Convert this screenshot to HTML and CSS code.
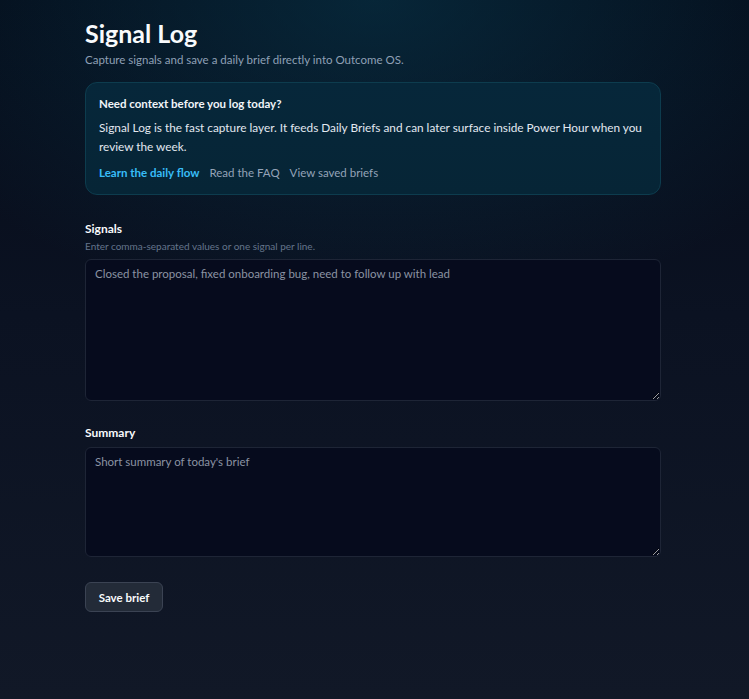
FILE: index.html
```html
<!DOCTYPE html>
<html lang="en">
<head>
<meta charset="utf-8">
<title>Signal Log</title>
<link rel="stylesheet" href="styles.css">
</head>
<body>
<main class="page">
  <h1 class="title">Signal Log</h1>
  <p class="subtitle">Capture signals and save a daily brief directly into Outcome OS.</p>

  <section class="context">
    <h2 class="context-title">Need context before you log today?</h2>
    <p class="context-body">Signal Log is the fast capture layer. It feeds Daily Briefs and can later surface inside Power Hour when you review the week.</p>
    <nav class="context-links">
      <a class="link link-primary" href="#">Learn the daily flow</a>
      <a class="link" href="#">Read the FAQ</a>
      <a class="link" href="#">View saved briefs</a>
    </nav>
  </section>

  <form class="form">
    <div class="field">
      <label class="label" for="signals">Signals</label>
      <p class="hint">Enter comma-separated values or one signal per line.</p>
      <textarea id="signals" class="input input-signals" placeholder="Closed the proposal, fixed onboarding bug, need to follow up with lead"></textarea>
    </div>
    <div class="field">
      <label class="label" for="summary">Summary</label>
      <textarea id="summary" class="input input-summary" placeholder="Short summary of today's brief"></textarea>
    </div>
    <button type="button" class="button">Save brief</button>
  </form>
</main>
</body>
</html>
```

FILE: styles.css
```css
* { box-sizing: border-box; }

html, body {
  margin: 0;
  min-height: 100%;
}

body {
  min-height: 699px;
  font-family: "Lato", "Noto Sans", sans-serif;
  color: #e5e7eb;
  background:
    radial-gradient(ellipse 70% 45% at 50% 0%, rgba(8, 60, 82, 0.55), rgba(8, 60, 82, 0) 100%),
    linear-gradient(180deg, #050b18 0%, #0b1222 45%, #111827 100%);
}

.page {
  width: 579px;
  margin: 0 auto;
  padding: 17px 3px 40px 0;
}

.title {
  margin: 0;
  font-size: 25px;
  line-height: 32px;
  font-weight: 700;
  color: #f8fafc;
}

.subtitle {
  margin: 3px 0 0;
  font-size: 11.5px;
  line-height: 16px;
  color: #8fa0b6;
}

.context {
  margin-top: 14px;
  padding: 13px 13px 13px;
  border: 1px solid #0d3c4e;
  border-radius: 12px;
  background: linear-gradient(180deg, #06273a 0%, #062536 100%);
}

.context-title {
  margin: 0;
  font-size: 11.5px;
  line-height: 16px;
  font-weight: 700;
  color: #f1f5f9;
}

.context-body {
  margin: 6px 0 0;
  font-size: 11.8px;
  line-height: 19px;
  color: #e2e8f0;
}

.context-links {
  margin-top: 9px;
  display: flex;
  gap: 10px;
  font-size: 11.5px;
  line-height: 16px;
}

.link {
  color: #94a3b8;
  text-decoration: none;
}

.link-primary {
  color: #38bdf8;
  font-weight: 700;
}

.form {
  margin-top: 26px;
  display: flex;
  flex-direction: column;
}

.field {
  display: flex;
  flex-direction: column;
}

.field + .field {
  margin-top: 24px;
}

.label {
  font-size: 12px;
  line-height: 16px;
  font-weight: 700;
  color: #f8fafc;
}

.hint {
  margin: 2px 0 0;
  font-size: 10px;
  line-height: 14px;
  color: #64748b;
}

.input {
  margin-top: 6px;
  width: 100%;
  padding: 6px 9px;
  border: 1px solid #1e2536;
  border-radius: 6px;
  background: #060b1d;
  color: #e5e7eb;
  font-family: "Lato", "Noto Sans", sans-serif;
  font-size: 11.5px;
  line-height: 16px;
  resize: vertical;
  outline: none;
}

.input::placeholder {
  color: #8b93a3;
}

.input-signals { height: 142px; }
.input-summary { height: 110px; }

.button {
  align-self: flex-start;
  margin-top: 25px;
  height: 30px;
  width: 78px;
  padding: 0;
  border: 1px solid #3b4353;
  border-radius: 6px;
  background: #232b38;
  color: #f8fafc;
  font-family: "Lato", "Noto Sans", sans-serif;
  font-size: 11.5px;
  font-weight: 700;
  cursor: pointer;
}
```
